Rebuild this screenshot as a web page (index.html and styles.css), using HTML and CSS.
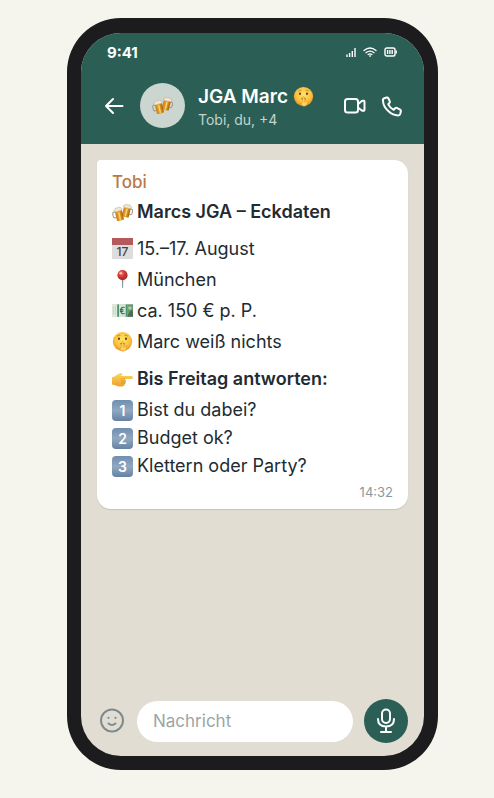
FILE: index.html
```html
<!DOCTYPE html>
<html lang="de">
<head>
  <meta charset="UTF-8" />
  <meta name="viewport" content="width=device-width, initial-scale=1" />
  <title>JGA Marc</title>
  <link rel="stylesheet" href="styles.css">
</head>
<body>

  <!-- Emoji, mehrfach verwendet -->
  <svg class="sprite" aria-hidden="true">
    <defs>
      <radialGradient id="face" cx="50%" cy="40%" r="60%">
        <stop offset="0" stop-color="#ffe36a" />
        <stop offset="0.65" stop-color="#fcc23c" />
        <stop offset="1" stop-color="#e98b25" />
      </radialGradient>
      <linearGradient id="beer" x1="0" y1="0" x2="1" y2="0">
        <stop offset="0" stop-color="#c97a14" />
        <stop offset="0.5" stop-color="#f0b034" />
        <stop offset="1" stop-color="#a85c0b" />
      </linearGradient>
      <linearGradient id="hand" x1="0" y1="0" x2="0" y2="1">
        <stop offset="0" stop-color="#ffd95c" />
        <stop offset="1" stop-color="#eba02c" />
      </linearGradient>
      <radialGradient id="ball" cx="38%" cy="32%" r="70%">
        <stop offset="0" stop-color="#f28b80" />
        <stop offset="0.4" stop-color="#d63f3a" />
        <stop offset="1" stop-color="#a82425" />
      </radialGradient>
    </defs>
    <symbol id="beers" viewBox="0 0 24 24">
      <g transform="rotate(14 17 11)">
        <path d="M20 7h1.600q1.600 0 1.600 2v2.500q0 2-1.600 2H20" fill="none" stroke="#a39a88" stroke-width="1.200" />
        <path d="M12.500 5h8v12q-4 1.500-8 0z" fill="url(#beer)" />
        <path d="M16.500 8v8" stroke="#ffd976" stroke-width="1.200" />
        <path d="M12 6.800q-.6-2.300 1.300-2.800 1.200-1.600 3.200-.8 2.400-1 3.500.6 1.600.8.9 2.800-2.300.8-4.300.2-2.200.9-4.600 0z" fill="#f1e6d3" stroke="#bfa98a" stroke-width=".6" />
      </g>
      <g transform="rotate(-13 8 15)">
        <path d="M4.500 10.500H3q-1.700 0-1.700 2V15q0 2 1.700 2h1.500" fill="none" stroke="#a39a88" stroke-width="1.200" />
        <path d="M4.300 8.500h8.200v12.500q-4.100 1.500-8.200 0z" fill="url(#beer)" />
        <path d="M8.400 12v8.300" stroke="#ffd976" stroke-width="1.200" />
        <path d="M3.700 10.300q-.8-2.400 1.200-3 1.200-1.700 3.300-.8 2.300-1 3.600.6 1.700.8 1 2.900-2.300.9-4.400.3-2.300.8-4.700 0z" fill="#f1e6d3" stroke="#bfa98a" stroke-width=".6" />
      </g>
    </symbol>
    <symbol id="shush" viewBox="0 0 24 24">
      <circle cx="12" cy="12" r="11" fill="url(#face)" />
      <path d="M6.200 5.700q1.500-1.300 3-.8M14.800 4.900q1.500-.5 3 .8" fill="none" stroke="#a8661f" stroke-width=".7" stroke-linecap="round" />
      <ellipse cx="8" cy="8.800" rx="1.100" ry="1.500" fill="#5d3410" />
      <ellipse cx="16" cy="8.800" rx="1.100" ry="1.500" fill="#5d3410" />
      <path d="M9.600 14.600q2.400-1.500 4.800 0" fill="none" stroke="#8d4f18" stroke-width=".9" stroke-linecap="round" />
      <path d="M11.300 12.500q.9-1 1.600 0l.5 5 2.500-.6q1.500 0 1.200 1.600l-1.300 3.200q-2.400 2-5 1-2-1-1.300-3.300l1.600-2.100z" fill="#ffd558" stroke="#d88d28" stroke-width=".6" />
      <path d="M12.900 18.500l2.800-.3" stroke="#d88d28" stroke-width=".5" />
    </symbol>
    <symbol id="pin" viewBox="0 0 24 24">
      <path d="M11.200 10h1.800l-.3 11.500q-.6 1-1.100 0z" fill="#8b969e" />
      <circle cx="12" cy="7" r="5.800" fill="url(#ball)" />
      <ellipse cx="10" cy="4.800" rx="1.700" ry="1.200" fill="#fbc5bf" />
    </symbol>
    <symbol id="money" viewBox="0 0 24 24">
      <path d="M0 5h24v14H0z" fill="#a9c7a6" />
      <path d="M0 5h6v14H0z" fill="#e3ebdf" />
      <path d="M6 5h2v14H6zM15.500 5h2v14h-2z" fill="#4b9277" />
      <path d="M8 5h7.500v14H8z" fill="#d7e6d4" />
      <path d="M17.500 5H24v14h-6.500z" fill="#669a6e" />
      <path d="M14.500 8.500q-4.500-1-4.500 3.500t4.500 3.500M9 11h4M9 13h4" fill="none" stroke="#2f735f" stroke-width="1.200" />
      <path d="M18 17l4-6 2 2v6h-6z" fill="#4d6d50" />
      <circle cx="20.500" cy="9" r="2" fill="#b4ceaa" />
      <path d="M1.500 7v10M4 7v10" stroke="#b9ccb9" stroke-width=".8" />
    </symbol>
    <symbol id="point" viewBox="0 0 24 24">
      <path d="M0 9.500q3-.7 5-2.500 3-2.500 6-2.500 1.600.5.800 2L10.300 8H22q2 .2 2 1.700T22 11.300h-7.500q1.700.7 1.200 2.200.8 1.200-.4 2.200.4 1.500-1 2.100 0 1.700-1.700 1.900-5.600 1-8.600-1.200L0 17.700z" fill="url(#hand)" />
      <path d="M14.500 11.300h-4M15.500 13.900h-4.700M15 16h-4.200" fill="none" stroke="#d48e28" stroke-width=".7" stroke-linecap="round" />
    </symbol>
  </svg>

  <main class="phone">
    <div class="status-bar">
      <span class="clock">9:41</span>
      <div class="status-icons">
        <svg width="10" height="10" viewBox="0 0 10 10" fill="none" stroke="#fff" stroke-width="1.400">
          <path d="M1 10V7.500M3.600 10V6M6.300 10V4M9 10V1" />
        </svg>
        <svg width="14" height="10" viewBox="0 0 14 10" fill="none" stroke="#fff" stroke-width="1.300" stroke-linecap="round">
          <path d="M1 3.500q6-5 12 0M3 5.700q4-3.300 8 0M5.200 7.600q1.800-1.500 3.600 0" />
          <circle cx="7" cy="9" r=".5" fill="#fff" stroke-width=".6" />
        </svg>
        <svg width="13" height="10" viewBox="0 0 13 10" fill="none" stroke="#fff" stroke-width="1.400">
          <rect x="1" y="1" width="10" height="8" rx="1.800" />
          <path d="M3.600 3v4M5.900 3v4M8.200 3v4M12.200 3.500v3" />
        </svg>
      </div>
    </div>

    <header class="chat-header">
      <button class="icon-btn back" aria-label="Zurück">
        <svg width="20" height="20" viewBox="0 0 20 20" fill="none" stroke="currentColor" stroke-width="2" stroke-linecap="round" stroke-linejoin="round">
          <path d="M18.500 10H2M9 3l-7 7 7 7" />
        </svg>
      </button>
      <div class="avatar"><svg class="emoji"><use href="#beers" /></svg></div>
      <div class="chat-info">
        <h1>JGA Marc <svg class="emoji"><use href="#shush" /></svg></h1>
        <p>Tobi, du, +4</p>
      </div>
      <div class="actions">
        <button class="icon-btn" aria-label="Videoanruf">
          <svg width="23" height="18" viewBox="0 0 23 18" fill="none" stroke="currentColor" stroke-width="2" stroke-linejoin="round">
            <rect x="2" y="2" width="13" height="13.500" rx="2.500" />
            <path d="M15 7.200L18.800 4q2.700-1 2.700 1v7.500q0 2-2.700 1L15 10.500" />
          </svg>
        </button>
        <button class="icon-btn" aria-label="Anrufen">
          <svg width="22" height="22" viewBox="0 0 22 22" fill="none" stroke="currentColor" stroke-width="2" stroke-linejoin="round">
            <path d="M2 6Q1.500 4 3.300 3.200L5.600 2.500q1.200-.2 1.700.8l1.500 2.900q.4 1-.4 1.700L7.200 9.200q1.700 3.800 5.500 5.600l1.500-1.600q.7-.7 1.600-.3l3.300 1.700q.9.500.8 1.400l-.6 2.800q-.5 1.600-2.100 1.600-5 .1-9.700-4.100Q2.300 11.700 2 6z" />
          </svg>
        </button>
      </div>
    </header>

    <section class="messages">
      <article class="bubble">
        <div class="sender">Tobi</div>
        <h2 class="line"><svg class="emoji"><use href="#beers" /></svg>Marcs JGA – Eckdaten</h2>
        <ul class="facts">
          <li class="line"><span class="calendar">17</span>15.–17. August</li>
          <li class="line"><svg class="emoji"><use href="#pin" /></svg>München</li>
          <li class="line"><svg class="emoji"><use href="#money" /></svg>ca. 150 € p. P.</li>
          <li class="line"><svg class="emoji"><use href="#shush" /></svg>Marc weiß nichts</li>
        </ul>
        <h2 class="line"><svg class="emoji"><use href="#point" /></svg>Bis Freitag antworten:</h2>
        <ol class="questions">
          <li class="line"><span class="keycap">1</span>Bist du dabei?</li>
          <li class="line"><span class="keycap">2</span>Budget ok?</li>
          <li class="line"><span class="keycap">3</span>Klettern oder Party?</li>
        </ol>
        <time>14:32</time>
      </article>
    </section>

    <footer class="composer">
      <button class="icon-btn smile" aria-label="Emoji">
        <svg width="26" height="26" viewBox="0 0 26 26" fill="none" stroke="currentColor" stroke-width="2" stroke-linecap="round">
          <circle cx="13" cy="12.500" r="11" />
          <path d="M9.500 15.500q3.500 3 7 0" />
          <circle cx="9.500" cy="9.800" r="1.100" fill="currentColor" stroke="none" />
          <circle cx="16.500" cy="9.800" r="1.100" fill="currentColor" stroke="none" />
        </svg>
      </button>
      <input type="text" placeholder="Nachricht" aria-label="Nachricht">
      <button class="mic" aria-label="Sprachnachricht">
        <svg width="20" height="26" viewBox="0 0 20 26" fill="none" stroke="currentColor" stroke-width="2" stroke-linecap="round">
          <rect x="6" y="1.500" width="8" height="13.500" rx="4" />
          <path d="M2 11q0 7.500 8 7.500t8-7.500M10 18.500v5M5 24h10" />
        </svg>
      </button>
    </footer>
  </main>

</body>
</html>
```
FILE: styles.css
```css
* {
  box-sizing: border-box;
}

body {
  display: flex;
  min-height: 100vh;
  margin: 0;
  padding: 18px 56px 28px 67px;
  background: #f5f5ed;
  font-family: Inter, "Liberation Sans", sans-serif;
  color: #222b31;
}

h1, h2, p, ul, ol {
  margin: 0;
  padding: 0;
}

ul, ol {
  list-style: none;
}

button {
  border: none;
  padding: 0;
  cursor: pointer;
}

.sprite {
  position: absolute;
  width: 0;
  height: 0;
}

.emoji {
  width: 21px;
  height: 21px;
  flex: none;
}

/* Gehäuse */
.phone {
  flex: 1;
  display: flex;
  flex-direction: column;
  min-width: 0;
  border: solid #1c1c1e;
  border-width: 15px 14px 14px;
  border-radius: 54px;
  background: #e1ddd2;
  overflow: hidden;
}

/* Statusleiste */
.status-bar {
  display: flex;
  align-items: center;
  justify-content: space-between;
  height: 38px;
  padding: 0 27px 0 26px;
  background: #2b5f56;
  color: #fff;
}

.clock {
  font-size: 15px;
  font-weight: 700;
}

.status-icons {
  display: flex;
  align-items: center;
  gap: 7px;
}

/* Kopfzeile */
.chat-header {
  display: flex;
  align-items: center;
  height: 73px;
  padding: 0 21px 4px 23px;
  background: #2b5f56;
  color: #fff;
}

.icon-btn {
  display: flex;
  background: none;
  color: inherit;
}

.avatar {
  display: flex;
  align-items: center;
  justify-content: center;
  flex: none;
  width: 45px;
  height: 45px;
  margin: 0 13px 0 16px;
  border-radius: 50%;
  background: #ccd6d0;
}

.chat-info {
  flex: 1;
  min-width: 0;
}

.chat-info h1 {
  display: flex;
  align-items: center;
  gap: 5px;
  font-size: 19px;
  line-height: 28px;
  font-weight: 600;
  white-space: nowrap;
}

.chat-info p {
  font-size: 14px;
  line-height: 18px;
  color: #c3d3ce;
}

.actions {
  display: flex;
  align-items: center;
  gap: 15px;
}

/* Verlauf */
.messages {
  flex: 1;
  padding: 16px;
}

.bubble {
  display: flex;
  flex-direction: column;
  padding: 10px 15px 9px;
  border-radius: 4px 14px 14px 14px;
  background: #fff;
  box-shadow: 0 1px 1px rgba(0,0,0,0.12);
  font-size: 18px;
}

.sender {
  margin-bottom: 3px;
  font-size: 17px;
  line-height: 24px;
  font-weight: 500;
  color: #b97a46;
}

.line {
  display: flex;
  align-items: center;
  gap: 4px;
}

.bubble h2 {
  font-size: 18px;
  line-height: 30px;
  font-weight: 600;
}

.facts {
  margin: 6px 0 7px;
  line-height: 31px;
}

.questions {
  margin-top: 2px;
  line-height: 28px;
}

/* Kalenderblatt und Zifferntasten */
.calendar,
.keycap {
  flex: none;
  width: 21px;
  height: 21px;
  text-align: center;
}

.calendar {
  border-top: 7px solid #b55a5c;
  background: #dddddd;
  color: #444;
  font-size: 12px;
  line-height: 14px;
  font-weight: 500;
}

.keycap {
  border-radius: 4px;
  background: linear-gradient(#6f8fb0, #91a8c1 50%, #6482a2);
  color: #fff;
  font-size: 14px;
  line-height: 21px;
  font-weight: 600;
}

.bubble time {
  align-self: flex-end;
  margin-top: 4px;
  font-size: 13px;
  line-height: 16px;
  color: #8b989b;
}

/* Eingabe */
.composer {
  display: flex;
  align-items: center;
  padding: 0 16px 13px 18px;
}

.smile {
  color: #7f8a8d;
}

.composer input {
  flex: 1;
  min-width: 0;
  height: 41px;
  margin: 0 11px 0 12px;
  padding: 0 16px;
  border: none;
  border-radius: 21px;
  outline: none;
  background: #fff;
  font-family: inherit;
  font-size: 17px;
}

.composer input::placeholder {
  color: #9aa5a8;
}

.mic {
  display: flex;
  align-items: center;
  justify-content: center;
  width: 44px;
  height: 44px;
  border-radius: 50%;
  background: #2b5f56;
  color: #fff;
}
```
